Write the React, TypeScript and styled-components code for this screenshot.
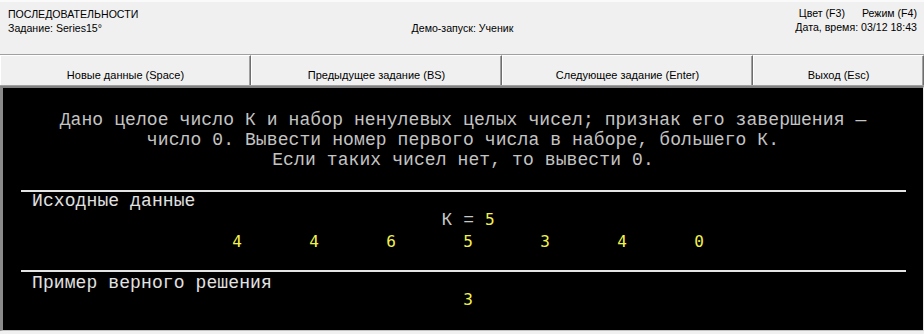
import React from "react";
import styled, { createGlobalStyle } from "styled-components";

const Global = createGlobalStyle`
  *, *::before, *::after { box-sizing: border-box; }
  html, body { margin: 0; padding: 0; background: #f0f0f0; }
  body {
    width: 924px;
    height: 334px;
    overflow: hidden;
    font-family: "Liberation Sans", Arial, sans-serif;
  }
`;

const Window = styled.div`
  width: 924px;
  height: 334px;
  display: flex;
  flex-direction: column;
  background: #f0f0f0;
`;

const Header = styled.header`
  height: 55px;
  border-top: 2px solid #fafafa;
  border-bottom: 1px solid #a0a0a0;
  padding: 5px 7px 0 8px;
  display: grid;
  grid-template-columns: 1fr auto 1fr;
  font-size: 10.6px;
  line-height: 14px;
  color: #000;
`;

const HeaderCol = styled.div<{ $align: "left" | "center" | "right" }>`
  display: flex;
  flex-direction: column;
  align-items: ${(p) =>
    p.$align === "left" ? "flex-start" : p.$align === "right" ? "flex-end" : "center"};
  margin-top: ${(p) => (p.$align === "right" ? "-1px" : "0")};
`;

const HeaderLine = styled.div`
  height: 14px;
  white-space: nowrap;
  display: flex;
  gap: 17px;
`;

const ButtonBar = styled.nav`
  height: 31px;
  display: grid;
  grid-template-columns: 251px 251px 251px 1fr;
  border-bottom: 1px solid #a0a0a0;
`;

const BarButton = styled.button`
  all: unset;
  box-sizing: border-box;
  height: 30px;
  border-top: 1px solid #ffffff;
  border-left: 1px solid #ffffff;
  border-right: 1px solid #6e6e6e;
  box-shadow: inset -1px 0 0 #a0a0a0;
  background: #f0f0f0;
  padding-top: 9px;
  text-align: center;
  font-family: "Liberation Sans", Arial, sans-serif;
  font-size: 11px;
  line-height: 14px;
  color: #000;
  cursor: default;
`;

const Console = styled.main`
  height: 245px;
  background: #000;
  border-top: 2px solid #808080;
  border-left: 3px solid #8a8a8a;
  border-right: 1px solid #e8e8e8;
  border-bottom: 1px solid #c4c4c4;
  display: flex;
  flex-direction: column;
  font-family: "Liberation Mono", "Courier New", monospace;
  font-size: 18px;
  letter-spacing: 0.1px;
  color: #c4c4c4;
`;

const Statement = styled.div`
  padding-top: 22px;
  line-height: 20px;
  text-align: center;
  white-space: pre;
`;

const Rule = styled.div<{ $top: number }>`
  height: 2px;
  background: #e4e4e4;
  margin: ${(p) => p.$top}px 17px 0 18px;
`;

const SectionLabel = styled.div<{ $top: number }>`
  margin-top: ${(p) => p.$top}px;
  padding-left: 29px;
  line-height: 18px;
  color: #e2e2e2;
  white-space: pre;
`;

const CenterRow = styled.div<{ $top?: number; $lh?: number }>`
  margin-top: ${(p) => p.$top ?? 0}px;
  padding-left: 10px;
  display: flex;
  justify-content: center;
  align-items: baseline;
  line-height: ${(p) => p.$lh ?? 20}px;
  white-space: pre;
`;

const Value = styled.span<{ $width?: number }>`
  display: inline-block;
  width: ${(p) => (p.$width ? `${p.$width}px` : "auto")};
  text-align: center;
  font-family: "DejaVu Sans Mono", "Liberation Mono", monospace;
  font-size: 16px;
  letter-spacing: 0;
  color: #f2f24c;
`;

const Plain = styled.span`
  color: #c8c8c8;
`;

const numbers = [4, 4, 6, 5, 3, 4, 0];

export default function App() {
  return (
    <Window>
      <Global />
      <Header>
        <HeaderCol $align="left">
          <HeaderLine>ПОСЛЕДОВАТЕЛЬНОСТИ</HeaderLine>
          <HeaderLine>Задание: Series15°</HeaderLine>
        </HeaderCol>
        <HeaderCol $align="center">
          <HeaderLine />
          <HeaderLine>Демо-запуск: Ученик</HeaderLine>
        </HeaderCol>
        <HeaderCol $align="right">
          <HeaderLine>
            <span>Цвет (F3)</span>
            <span>Режим (F4)</span>
          </HeaderLine>
          <HeaderLine>Дата, время: 03/12 18:43</HeaderLine>
        </HeaderCol>
      </Header>
      <ButtonBar>
        <BarButton>Новые данные (Space)</BarButton>
        <BarButton>Предыдущее задание (BS)</BarButton>
        <BarButton>Следующее задание (Enter)</BarButton>
        <BarButton>Выход (Esc)</BarButton>
      </ButtonBar>
      <Console>
        <Statement>
          {"Дано целое число К и набор ненулевых целых чисел; признак его завершения —\n" +
            "число 0. Вывести номер первого числа в наборе, большего К.\n" +
            "Если таких чисел нет, то вывести 0."}
        </Statement>
        <Rule $top={20} />
        <SectionLabel $top={0}>Исходные данные</SectionLabel>
        <CenterRow>
          <Plain>К = </Plain>
          <Value>5</Value>
        </CenterRow>
        <CenterRow $top={2}>
          {numbers.map((n, i) => (
            <Value key={i} $width={77}>
              {n}
            </Value>
          ))}
        </CenterRow>
        <Rule $top={18} />
        <SectionLabel $top={2}>Пример верного решения</SectionLabel>
        <CenterRow $lh={16}>
          <Value>3</Value>
        </CenterRow>
      </Console>
    </Window>
  );
}
